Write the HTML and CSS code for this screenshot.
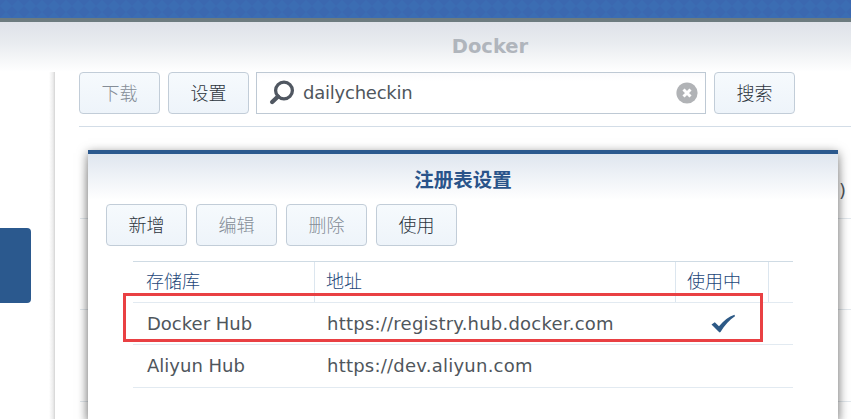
FILE: index.html
```html
<!DOCTYPE html>
<html lang="zh-CN">
<head>
<meta charset="utf-8">
<title>Docker</title>
<link rel="stylesheet" href="styles.css">
</head>
<body>
<div class="desktop">
  <svg width="851" height="18"><defs><pattern id="weave" width="12" height="12" patternUnits="userSpaceOnUse"><path d="M0 6L6 0L12 6L6 12Z" fill="#3b6db3"/></pattern></defs><rect width="851" height="18" fill="url(#weave)"/></svg>
</div>
<div class="window">
  <header class="titlebar">Docker</header>
  <div class="body">
    <nav class="sidebar"><div class="selected"></div></nav>
    <main class="content">
      <div class="toolbar">
        <button class="btn disabled">下载</button>
        <button class="btn">设置</button>
        <div class="search">
          <svg class="lens" width="26" height="26" viewBox="0 0 26 26"><circle cx="15" cy="10.5" r="8.4" fill="none" stroke="#505761" stroke-width="3.3"/><path d="M9 16.5L3.2 22" stroke="#505761" stroke-width="4.4" stroke-linecap="round"/></svg>
          <span class="query">dailycheckin</span>
          <svg width="22" height="22" viewBox="0 0 22 22"><circle cx="11" cy="11" r="10.6" fill="#b1b3b6"/><path d="M7.5 7.5L14.5 14.5M14.5 7.5L7.5 14.5" stroke="#fff" stroke-width="3"/></svg>
        </div>
        <button class="btn">搜索</button>
      </div>
      <div class="results">
        <div class="result"><span class="tail">)</span></div>
        <div class="result"></div>
        <div class="result"></div>
      </div>
    </main>
  </div>
</div>
<section class="dialog">
  <h2 class="dialog-title">注册表设置</h2>
  <div class="actions">
    <button class="btn">新增</button>
    <button class="btn disabled">编辑</button>
    <button class="btn disabled">删除</button>
    <button class="btn">使用</button>
  </div>
  <div class="table">
    <div class="row head"><div>存储库</div><div>地址</div><div>使用中</div><div></div></div>
    <div class="row first"><div>Docker Hub</div><div class="url">https://registry.hub.docker.com</div><div class="status"><svg width="26" height="20" viewBox="0 0 26 20"><path d="M1.5 10.5L4.8 8.3L9 12.2C14 6.5 18.5 2.8 24.5 .8L25 2.3C19.5 6 14.5 11.5 10.5 18Q9.5 19 8.5 17.6Z" fill="#2d5986"/></svg></div><div></div></div>
    <div class="row last"><div>Aliyun Hub</div><div class="url">https://dev.aliyun.com</div><div></div><div></div></div>
  </div>
  <div class="highlight"></div>
</section>
</body>
</html>
```

FILE: styles.css
```css
* { box-sizing: border-box; }
body {
  margin: 0;
  width: 851px;
  height: 419px;
  overflow: hidden;
  position: relative;
  background: #fff;
  color: #4f565c;
  font: 18px/24px "DejaVu Sans", "Noto Sans CJK SC", sans-serif;
}
svg { display: block; flex: none; }
.desktop { height: 18px; background: #3b68b0; }
.window { height: 401px; border-top: 4px solid #6d7b7f; background: #fff; }
.titlebar {
  height: 50px;
  padding-right: 1px;
  padding-left: 130px;
  background: linear-gradient(#dfe2e9, #e8ebef 40%, #fff);
  color: #b0b5bc;
  font-size: 19.5px;
  font-weight: bold;
  line-height: 50px;
  text-align: center;
}
.body { display: flex; height: 347px; }
.sidebar {
  width: 55px;
  flex: none;
  padding-top: 156px;
  background: linear-gradient(90deg, transparent 49px, #ececec 53px, #d4d4d4 55px);
}
.selected { width: 31px; height: 75px; border-radius: 0 4px 4px 0; background: #2b598e; }
.content { flex: 1; padding-left: 24px; }
.toolbar { display: flex; gap: 8px; height: 55px; border-bottom: 1px solid #d3dde7; }
.btn {
  width: 81px;
  height: 42px;
  flex: none;
  padding: 0 0 2px;
  border: 1px solid #c2cdd8;
  border-radius: 4px;
  background: linear-gradient(#f6fafd, #eef4fa);
  color: #2c343d;
  font: 18px/24px "Noto Sans CJK SC", sans-serif;
  font-weight: 300;
}
.disabled { color: #858d97; }
.search {
  display: flex;
  align-items: center;
  width: 450px;
  height: 42px;
  margin-left: -1px;
  padding: 0 7px 0 12px;
  border: 1px solid #bec9d4;
  background: linear-gradient(#fafafc, #fff 8px);
}
.query { flex: 1; margin-left: 8px; letter-spacing: -.23px; }
.result { height: 91.5px; margin-left: 1px; border-bottom: 1px solid #e2e8ed; }
.tail { display: block; margin: 0 4px 0 auto; padding-top: 52px; width: 8px; }
.dialog {
  position: absolute;
  left: 88px;
  top: 150px;
  width: 750px;
  height: 269px;
  border-top: 4px solid #2b598e;
  background: linear-gradient(#dfe6ef, #fff 46px);
  box-shadow: 0 3px 10px rgba(0, 0, 0, .55), 0 20px 10px rgba(0, 0, 0, .1);
}
.dialog-title {
  height: 50px;
  margin: 0;
  color: #29548a;
  font: bold 19.5px/50px "Noto Sans CJK SC", sans-serif;
  text-align: center;
}
.actions { display: flex; gap: 9px; padding-left: 18px; }
.table { width: 660px; margin: 15px 0 0 45px; border-top: 1px solid #cfdbe4; }
.row {
  display: grid;
  grid-template-columns: 182px 361px 93px 24px;
  height: 42px;
  border-bottom: 1px solid #e2eaf1;
  line-height: 42px;
}
.row > div { padding-left: 12px; }
.row > div:first-child { padding-left: 14px; }
.url { letter-spacing: .23px; }
.row.head > div { padding-left: 11px; }
.row.head > div:first-child { padding-left: 13px; }
.head { height: 41px; color: #1d4779; line-height: 37px; font-family: "Noto Sans CJK SC", sans-serif; font-weight: 300; }
.head > div:not(:last-child) { border-right: 1px solid #dce6ef; }
.last { height: 43px; }
.row .status { padding: 11px 0 0 34px; }
.highlight {
  position: absolute;
  left: 35px;
  top: 139px;
  width: 640px;
  height: 49px;
  border: 3px solid #e94043;
}
```
